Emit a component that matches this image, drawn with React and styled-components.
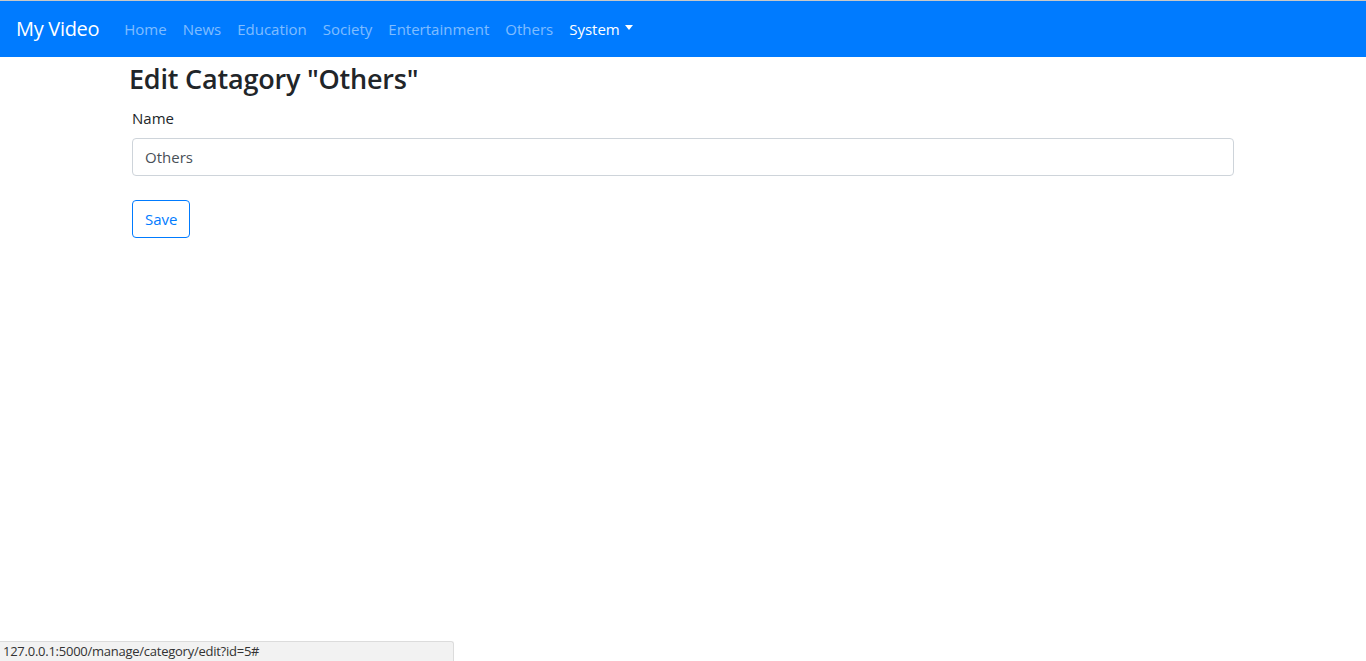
import React from "react";
import styled, { createGlobalStyle } from "styled-components";

const Global = createGlobalStyle`
  html, body { margin: 0; padding: 0; }
  body {
    font-family: "Open Sans", "Noto Sans", sans-serif;
    font-size: 16px;
    line-height: 1.5;
    color: #212529;
    background: #fff;
    height: 661px;
    overflow: hidden;
  }
  * { box-sizing: border-box; }
`;

const Page = styled.div`
  height: 661px;
  border-top: 1px solid #c8c8c8;
  position: relative;
`;

const Navbar = styled.nav`
  background: #007bff;
  height: 56px;
  display: flex;
  align-items: center;
  padding: 8px 16px;
`;

const Brand = styled.a`
  color: #fff;
  font-size: 20px;
  margin-right: 17px;
  text-decoration: none;
  letter-spacing: -0.3px;
`;

const NavList = styled.ul`
  display: flex;
  list-style: none;
  margin: 0;
  padding: 0;
`;

const NavLink = styled.a`
  display: flex;
  align-items: center;
  padding: 8px;
  font-size: 15px;
  letter-spacing: 0;
  color: ${(p) => (p.$active ? "#fff" : "rgba(255,255,255,0.5)")};
  text-decoration: none;
`;

const Caret = styled.span`
  display: inline-block;
  margin-left: 5px;
  border-top: 5px solid #fff;
  border-left: 4px solid transparent;
  border-right: 4px solid transparent;
  transform: translateY(-2px);
`;

const Container = styled.main`
  width: 1140px;
  margin: 0 auto;
  padding: 0 15px;
`;

const Title = styled.h2`
  font-size: 27px;
  font-weight: 600;
  margin: 6px 0 12px 1px;
  line-height: 1.2;
  letter-spacing: -0.2px;
`;

const Form = styled.form`
  padding: 0 4px;
`;

const Group = styled.div`
  margin-bottom: 24px;
`;

const Label = styled.label`
  display: block;
  font-size: 15px;
  margin-bottom: 8px;
`;

const Input = styled.input`
  display: block;
  width: 100%;
  height: 38px;
  padding: 6px 12px;
  font-family: inherit;
  font-size: 15px;
  color: #495057;
  border: 1px solid #ced4da;
  border-radius: 4px;
  outline: none;
`;

const Button = styled.button`
  height: 38px;
  padding: 6px 12px;
  font-family: inherit;
  font-size: 15px;
  color: #007bff;
  background: transparent;
  border: 1px solid #007bff;
  border-radius: 4px;
`;

const StatusBar = styled.div`
  position: absolute;
  left: 0;
  bottom: 0;
  width: 454px;
  height: 20px;
  background: #f2f2f2;
  border-top: 1px solid #dcdcdc;
  border-right: 1px solid #dcdcdc;
  border-top-right-radius: 3px;
  font-size: 13px;
  line-height: 19px;
  padding-left: 3px;
  color: #333;
  letter-spacing: -0.25px;
`;

const links = ["Home", "News", "Education", "Society", "Entertainment", "Others"];

export default function App() {
  return (
    <Page>
      <Global />
      <Navbar>
        <Brand href="#">My Video</Brand>
        <NavList>
          {links.map((l) => (
            <li key={l}>
              <NavLink href="#">{l}</NavLink>
            </li>
          ))}
          <li>
            <NavLink href="#" $active>
              System<Caret />
            </NavLink>
          </li>
        </NavList>
      </Navbar>
      <Container>
        <Title>Edit Catagory "Others"</Title>
        <Form onSubmit={(e) => e.preventDefault()}>
          <Group>
            <Label>Name</Label>
            <Input defaultValue="Others" />
          </Group>
          <Button type="submit">Save</Button>
        </Form>
      </Container>
      <StatusBar>127.0.0.1:5000/manage/category/edit?id=5#</StatusBar>
    </Page>
  );
}
